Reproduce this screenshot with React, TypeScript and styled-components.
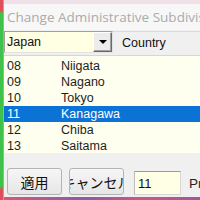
import styled, { createGlobalStyle } from "styled-components";

const GlobalStyle = createGlobalStyle`
  html, body {
    margin: 0;
    padding: 0;
    background: #f0f0f0;
  }
  #root {
    width: 200px;
    height: 200px;
    overflow: hidden;
  }
`;

const Screen = styled.div`
  display: flex;
  width: 200px;
  height: 200px;
  overflow: hidden;
  font-family: "Liberation Sans", Arial, sans-serif;
`;

const EdgeStrip = styled.div`
  width: 3px;
  flex: none;
  background: linear-gradient(
    to bottom,
    #e0505a 0px,
    #e0505a 11px,
    #3fc24a 13px,
    #3fc24a 186px,
    #e0505a 190px
  );
`;

const Window = styled.div`
  flex: 1;
  min-width: 0;
  display: flex;
  flex-direction: column;
  background: #f0f0f0;
  border-left: 1px solid #a9a9a9;
`;

const TopStrip = styled.div`
  height: 4px;
  flex: none;
  background: #efe1e7;
`;

const TitleBar = styled.div`
  height: 26px;
  flex: none;
  display: flex;
  align-items: center;
  padding-left: 3px;
  background: #f7f7f7;
  color: #ababab;
  font-family: "Open Sans", "Noto Sans", sans-serif;
  font-size: 13.5px;
  white-space: nowrap;
  overflow: hidden;
`;

const ComboRow = styled.div`
  display: flex;
  height: 22px;
  margin-top: 1px;
  flex: none;
`;

const Combo = styled.div`
  width: 109px;
  flex: none;
  box-sizing: border-box;
  display: flex;
  align-items: center;
  justify-content: space-between;
  background: #ffffe4;
  border: 1px solid #a0a0a0;
  border-right-color: #e3e3e3;
  border-bottom-color: #e3e3e3;
  padding-left: 2px;
  font-size: 12.5px;
  color: #111;
`;

const DropButton = styled.div`
  width: 19px;
  height: 20px;
  box-sizing: border-box;
  display: flex;
  align-items: center;
  justify-content: center;
  background: #ececec;
  border: 1px solid;
  border-color: #ffffff #6b6b6b #6b6b6b #ffffff;
  box-shadow: inset -1px -1px 0 #a0a0a0;
`;

const Arrow = styled.div`
  width: 0;
  height: 0;
  border-left: 4px solid transparent;
  border-right: 4px solid transparent;
  border-top: 4px solid #000;
`;

const HeaderCell = styled.div`
  flex: 1;
  display: flex;
  align-items: center;
  padding-left: 9px;
  border-top: 1px solid #dcdcdc;
  font-size: 12.5px;
  color: #111;
  white-space: nowrap;
`;

const List = styled.div`
  height: 98px;
  margin-top: 2px;
  flex: none;
  background: #ffffef;
  border-top: 1px solid #d6d6d6;
  padding-top: 2px;
  box-sizing: border-box;
  overflow: hidden;
`;

const Row = styled.div<{ $selected?: boolean }>`
  display: flex;
  height: 16px;
  align-items: center;
  font-size: 12.5px;
  color: ${(p) => (p.$selected ? "#ffffff" : "#1e1e1e")};
  background: ${(p) => (p.$selected ? "#0b72d6" : "transparent")};
`;

const CodeCell = styled.span`
  width: 54px;
  padding-left: 3px;
  flex: none;
`;

const NameCell = styled.span`
  white-space: nowrap;
`;

const ButtonRow = styled.div`
  display: flex;
  align-items: center;
  height: 27px;
  margin-top: 15px;
  padding-left: 3px;
  flex: none;
`;

const PushButton = styled.div`
  width: 55px;
  height: 27px;
  flex: none;
  box-sizing: border-box;
  border: 1px solid #b4b4b4;
  border-radius: 3px;
  background: linear-gradient(to bottom, #f6f6f6, #e6e6e6);
  display: flex;
  align-items: center;
  justify-content: center;
  overflow: hidden;
  & + & {
    margin-left: 7px;
  }
`;

/* negative side margins let a label wider than its button stay centred and clip evenly */
const ButtonLabel = styled.span`
  flex: none;
  margin: 0 -12px;
  font-family: "Noto Sans CJK JP", "Noto Sans", sans-serif;
  font-size: 14px;
  color: #111;
  white-space: nowrap;
`;

const NumberInput = styled.div`
  width: 47px;
  height: 24px;
  margin-left: 10px;
  margin-top: 3px;
  box-sizing: border-box;
  flex: none;
  background: #ffffe6;
  border: 1px solid #d8d8d8;
  border-top-color: #9a9a9a;
  border-left-color: #bdbdbd;
  display: flex;
  align-items: center;
  padding-left: 3px;
  font-size: 13px;
  color: #111;
`;

const SideLabel = styled.span`
  margin-left: 8px;
  margin-top: 3px;
  font-size: 13.5px;
  color: #222;
  white-space: nowrap;
`;

const BottomStrip = styled.div`
  height: 3px;
  margin-top: 2px;
  flex: none;
  background: linear-gradient(to right, #d45a7a, #8a5aa8 40%, #c85a80 70%, #9a5aa0);
`;

const prefectures = [
  { code: "08", name: "Niigata" },
  { code: "09", name: "Nagano" },
  { code: "10", name: "Tokyo" },
  { code: "11", name: "Kanagawa" },
  { code: "12", name: "Chiba" },
  { code: "13", name: "Saitama" },
  { code: "14", name: "Ibaraki" },
];

export default function App() {
  const selected = "11";

  return (
    <>
      <GlobalStyle />
      <Screen>
        <EdgeStrip />
        <Window>
          <TopStrip />
          <TitleBar>Change Administrative Subdivision</TitleBar>
          <ComboRow>
            <Combo>
              Japan
              <DropButton>
                <Arrow />
              </DropButton>
            </Combo>
            <HeaderCell>Country</HeaderCell>
          </ComboRow>
          <List>
            {prefectures.map((p) => (
              <Row key={p.code} $selected={p.code === selected}>
                <CodeCell>{p.code}</CodeCell>
                <NameCell>{p.name}</NameCell>
              </Row>
            ))}
          </List>
          <ButtonRow>
            <PushButton>
              <ButtonLabel>適用</ButtonLabel>
            </PushButton>
            <PushButton>
              <ButtonLabel>キャンセル</ButtonLabel>
            </PushButton>
            <NumberInput>11</NumberInput>
            <SideLabel>Prefecture</SideLabel>
          </ButtonRow>
          <BottomStrip />
        </Window>
      </Screen>
    </>
  );
}
